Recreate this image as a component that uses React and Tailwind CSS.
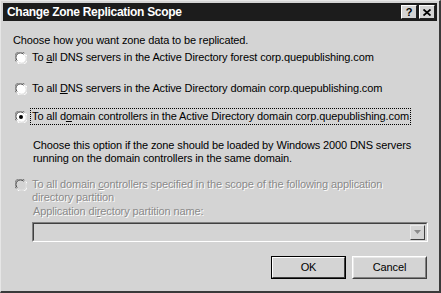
import React from "react";

function Radio({ checked, disabled }) {
  return (
    <svg width="12" height="12" viewBox="0 0 12 12" className="shrink-0">
      <circle cx="6" cy="6" r="5.5" fill={disabled ? "#d4d4d4" : "#ffffff"} />
      <path d="M1.2 9.5 A5.5 5.5 0 0 1 9.5 1.2" stroke="#7a7a7a" strokeWidth="1" fill="none" />
      <path d="M2.2 8.6 A4.5 4.5 0 0 1 8.6 2.2" stroke="#3a3a3a" strokeWidth="1" fill="none" />
      <path d="M10.8 2.5 A5.5 5.5 0 0 1 2.5 10.8" stroke="#ffffff" strokeWidth="1" fill="none" />
      <path d="M9.8 3.4 A4.5 4.5 0 0 1 3.4 9.8" stroke="#e0e0e0" strokeWidth="1" fill="none" />
      {checked && <circle cx="6" cy="6" r="2" fill="#000" />}
    </svg>
  );
}

const font = { fontFamily: '"Liberation Sans", Arial, sans-serif' };

export default function App() {
  return (
    <div
      className="w-[441px] h-[293px] overflow-hidden bg-[#d4d4d4] border-t border-l border-[#e6e6e6] border-r-2 border-b-2 border-r-[#3a3a3a] border-b-[#3a3a3a] box-border flex flex-col text-[11px] tracking-[-0.12px] text-black leading-[13px] whitespace-nowrap"
      style={font}
    >
      {/* Title bar */}
      <div className="mx-[2px] mt-[2px] h-[18px] shrink-0 bg-[#1c1c1c] flex items-center pl-[4px] pr-[2px]">
        <span className="text-white font-bold text-[12px] tracking-[-0.3px]">Change Zone Replication Scope</span>
        <div className="ml-auto flex gap-[2px]">
          <div className="w-[16px] h-[14px] bg-[#d4d4d4] border border-t-white border-l-white border-r-[#222] border-b-[#222] flex items-center justify-center text-[11px] font-bold leading-none tracking-normal">?</div>
          <div className="w-[16px] h-[14px] bg-[#d4d4d4] border border-t-white border-l-white border-r-[#222] border-b-[#222] flex items-center justify-center">
            <svg width="8" height="7" viewBox="0 0 8 7">
              <path d="M0.5 0.5 L7.5 6.5 M7.5 0.5 L0.5 6.5" stroke="#000" strokeWidth="1.8" />
            </svg>
          </div>
        </div>
      </div>

      <div className="pl-[12px] pr-[12px] flex flex-col">
        <div className="mt-[13px]">Choose how you want zone data to be replicated.</div>

        <div className="mt-[4px] flex items-center gap-[5px] pl-[2px]">
          <Radio />
          <span>To <u>a</u>ll DNS servers in the Active Directory forest corp.quepublishing.com</span>
        </div>

        <div className="mt-[18px] flex items-center gap-[5px] pl-[2px]">
          <Radio />
          <span>To all <u>D</u>NS servers in the Active Directory domain corp.quepublishing.com</span>
        </div>

        <div className="mt-[13px] flex items-center gap-[3px] pl-[2px]">
          <Radio checked />
          <span className="border border-dotted border-black px-[1px] py-[1px]">To all d<u>o</u>main controllers in the Active Directory domain corp.quepublishing.com</span>
        </div>

        <div className="mt-[14px] pl-[20px]">
          <div>Choose this option if the zone should be loaded by Windows 2000 DNS servers</div>
          <div>running on the domain controllers in the same domain.</div>
        </div>

        <div className="mt-[13px] flex items-start gap-[5px] pl-[2px] text-[#8a8a8a] [text-shadow:1px_1px_0_#ffffff]">
          <div className="pt-[1px]"><Radio disabled /></div>
          <div>
            <div>To all domain <u>c</u>ontrollers specified in the scope of the following application</div>
            <div>directory partition</div>
          </div>
        </div>

        <div className="mt-[1px] pl-[20px] text-[#8a8a8a] [text-shadow:1px_1px_0_#ffffff]">
          Application di<u>r</u>ectory partition name:
        </div>

        <div className="mt-[4px] ml-[19px] w-[396px] h-[20px] border border-t-[#808080] border-l-[#808080] border-r-white border-b-white">
          <div className="h-full border border-t-[#404040] border-l-[#404040] border-r-[#d4d4d4] border-b-[#d4d4d4] flex justify-end items-center pr-[1px]">
            <div className="w-[15px] h-[15px] bg-[#d4d4d4] border border-t-[#e8e8e8] border-l-[#e8e8e8] border-r-[#404040] border-b-[#404040] flex items-center justify-center">
              <svg width="7" height="4" viewBox="0 0 7 4">
                <path d="M0 0 L7 0 L3.5 4 Z" fill="#8a8a8a" />
              </svg>
            </div>
          </div>
        </div>

        <div className="mt-[14px] flex justify-end gap-[6px] pr-0">
          <div className="w-[75px] h-[23px] border border-black">
            <div className="h-full border border-t-white border-l-white border-r-[#404040] border-b-[#404040] flex items-center justify-center">OK</div>
          </div>
          <div className="w-[75px] h-[23px] border border-t-white border-l-white border-r-[#404040] border-b-[#404040]">
            <div className="h-full border border-t-[#e8e8e8] border-l-[#e8e8e8] border-r-[#808080] border-b-[#808080] flex items-center justify-center">Cancel</div>
          </div>
        </div>
      </div>
    </div>
  );
}
